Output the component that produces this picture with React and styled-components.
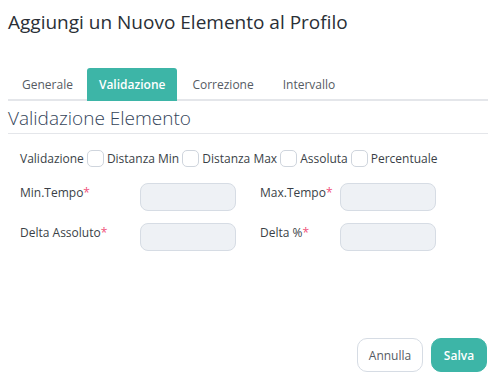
import React from "react";
import styled, { createGlobalStyle } from "styled-components";

const Global = createGlobalStyle`
  html, body { margin: 0; padding: 0; background: #fff; }
  body { font-family: "Open Sans", "Noto Sans", sans-serif; color: #2f3640; }
  * { box-sizing: border-box; }
`;

const TEAL = "#3db5a7";

const Page = styled.div`
  min-height: 100vh;
  display: flex;
  flex-direction: column;
  padding: 0 10px 8px 8px;
`;

const Title = styled.h1`
  margin: 0;
  padding-top: 10px;
  font-size: 19px;
  font-weight: 500;
  color: #2a2f36;
  line-height: 24px;
`;

const Tabs = styled.div`
  display: flex;
  margin-top: 34px;
  border-bottom: 2px solid #e4e6ea;
  width: 480px;
`;

const Tab = styled.div`
  height: 33px;
  margin-bottom: -2px;
  display: flex;
  align-items: center;
  padding: 0 ${(p) => p.$pad}px;
  font-size: 12px;
  font-weight: ${(p) => (p.$active ? 600 : 400)};
  color: ${(p) => (p.$active ? "#fff" : "#555b63")};
  background: ${(p) => (p.$active ? TEAL : "transparent")};
  border-radius: 3px 3px 0 0;
`;

const Section = styled.h2`
  margin: 0;
  padding-top: 2px;
  width: 480px;
  font-size: 19px;
  font-weight: 300;
  color: #34445a;
  line-height: 30px;
  border-bottom: 1px solid #e4e6ea;
`;

const CheckRow = styled.div`
  display: flex;
  align-items: center;
  gap: 3px;
  padding-left: 12px;
  margin-top: 16px;
  font-size: 12px;
  color: #3a3f47;
`;

const Box = styled.span`
  display: inline-block;
  width: 17px;
  height: 17px;
  border: 1px solid #cfd5dd;
  border-radius: 5px;
  background: #fff;
`;

const Grid = styled.div`
  display: grid;
  grid-template-columns: 120px 96px 104px 96px;
  row-gap: 12px;
  padding-left: 12px;
  margin-top: 16px;
  & > :nth-child(4n + 3) { padding-left: 24px; }
`;

const Label = styled.label`
  font-size: 12px;
  color: #3a3f47;
  padding-top: 1px;
`;

const Star = styled.span`
  color: #f0517a;
`;

const Input = styled.div`
  height: 28px;
  background: #eef1f5;
  border: 1px solid #d6dce4;
  border-radius: 8px;
`;

const Footer = styled.div`
  margin-top: auto;
  display: flex;
  justify-content: flex-end;
  gap: 8px;
`;

const Button = styled.button`
  height: 34px;
  width: ${(p) => p.$w}px;
  padding: 0;
  border-radius: 10px;
  font-family: inherit;
  font-size: 12px;
  font-weight: ${(p) => (p.$primary ? 600 : 400)};
  color: ${(p) => (p.$primary ? "#fff" : "#555b63")};
  background: ${(p) => (p.$primary ? TEAL : "#fff")};
  border: 1px solid ${(p) => (p.$primary ? TEAL : "#d6dce4")};
`;

export default function App() {
  return (
    <>
      <Global />
      <Page>
        <Title>Aggiungi un Nuovo Elemento al Profilo</Title>
        <Tabs>
          <Tab $pad={14}>Generale</Tab>
          <Tab $pad={12} $active>Validazione</Tab>
          <Tab $pad={15}>Correzione</Tab>
          <Tab $pad={14}>Intervallo</Tab>
        </Tabs>
        <Section>Validazione Elemento</Section>
        <CheckRow>
          <span>Validazione</span>
          <Box />
          <span>Distanza Min</span>
          <Box />
          <span>Distanza Max</span>
          <Box />
          <span>Assoluta</span>
          <Box />
          <span>Percentuale</span>
        </CheckRow>
        <Grid>
          <Label>Min.Tempo<Star>*</Star></Label>
          <Input />
          <Label>Max.Tempo<Star>*</Star></Label>
          <Input />
          <Label>Delta Assoluto<Star>*</Star></Label>
          <Input />
          <Label>Delta %<Star>*</Star></Label>
          <Input />
        </Grid>
        <Footer>
          <Button $w={66}>Annulla</Button>
          <Button $w={56} $primary>Salva</Button>
        </Footer>
      </Page>
    </>
  );
}
